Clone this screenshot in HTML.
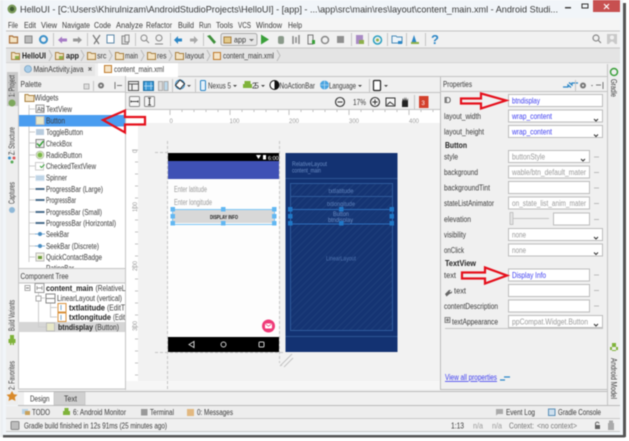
<!DOCTYPE html>
<html><head><meta charset="utf-8"><style>
html,body{margin:0;padding:0;background:#fff;width:629px;height:441px;overflow:hidden}
svg{display:block;filter:blur(.45px)}
text{font-family:"Liberation Sans",sans-serif;font-size:8px;fill:#3a3a3a}
.b{font-weight:bold;fill:#222}
.g{fill:#9a9a9a}
.bl{fill:#3d3df0}
.f{fill:#fff;stroke:#bdbdbd;stroke-width:1}
.s{stroke:#c4c4c4;stroke-width:1}
.fd{fill:#f3e3c3;stroke:#a9803f;stroke-width:1}
.ar{fill:none;stroke:#e5101c;stroke-width:2.2}
.pb{fill:#4a6d8c}
</style></head><body>
<svg width="629" height="441" viewBox="0 0 629 441" xmlns="http://www.w3.org/2000/svg">
<defs>
<pattern id="h" width="5" height="5" patternUnits="userSpaceOnUse" patternTransform="rotate(45)"><rect width="5" height="5" fill="#153473"/><rect width="1.2" height="5" fill="#1d3e7a"/></pattern>
</defs>
<rect width="629" height="441" fill="#fff"/>
<rect x="0" y="0" width="5" height="437" fill="#eceff2"/>
<rect x="623" y="3" width="3" height="434" fill="#555"/>
<rect x="3" y="435" width="622" height="2.5" fill="#555"/>
<rect x="3" y="0" width="620" height="435" fill="#f1f5f9"/>
<!-- title -->
<circle cx="12" cy="9" r="4.5" fill="#7a9a5a"/><circle cx="12" cy="9" r="2.2" fill="#3d5a32"/>
<text x="20" y="12.5" font-size="9.5" style="font-size:9.5px" textLength="538" lengthAdjust="spacingAndGlyphs">HelloUI - [C:\Users\Khirulnizam\AndroidStudioProjects\HelloUI] - [app] - ...\app\src\main\res\layout\content_main.xml - Android Studi...</text>
<rect x="593" y="0" width="27" height="12" fill="#c75050"/>
<path d="M604 4l5 5M609 4l-5 5" stroke="#fff" stroke-width="1.2"/>
<rect x="582" y="4" width="6" height="4" fill="none" stroke="#333" stroke-width="1"/>
<rect x="565" y="7" width="6" height="1.5" fill="#444"/>
<!-- menu -->
<rect x="6" y="18" width="614" height="13" fill="#f5f5f5"/>
<g>
<text x="8" y="28" textLength="10" lengthAdjust="spacingAndGlyphs">File</text>
<text x="24" y="28" textLength="12" lengthAdjust="spacingAndGlyphs">Edit</text>
<text x="41" y="28" textLength="16" lengthAdjust="spacingAndGlyphs">View</text>
<text x="62" y="28" textLength="28" lengthAdjust="spacingAndGlyphs">Navigate</text>
<text x="94" y="28" textLength="17" lengthAdjust="spacingAndGlyphs">Code</text>
<text x="116" y="28" textLength="27" lengthAdjust="spacingAndGlyphs">Analyze</text>
<text x="146" y="28" textLength="26" lengthAdjust="spacingAndGlyphs">Refactor</text>
<text x="178" y="28" textLength="16" lengthAdjust="spacingAndGlyphs">Build</text>
<text x="199" y="28" textLength="12" lengthAdjust="spacingAndGlyphs">Run</text>
<text x="216" y="28" textLength="17" lengthAdjust="spacingAndGlyphs">Tools</text>
<text x="238" y="28" textLength="13" lengthAdjust="spacingAndGlyphs">VCS</text>
<text x="256" y="28" textLength="26" lengthAdjust="spacingAndGlyphs">Window</text>
<text x="288" y="28" textLength="14" lengthAdjust="spacingAndGlyphs">Help</text>
</g>
<!-- toolbar -->
<rect x="6" y="31" width="614" height="17" fill="#f1f1f1"/>
<path d="M6 31H620" class="s"/>
<path d="M9.500 36h3l1 1h4v6h-8z" fill="#f3e3c3" stroke="#a9703a" stroke-width="1.2"/>
<rect x="25" y="36" width="7" height="7" fill="#bbb" stroke="#888"/>
<circle cx="43.500" cy="39.500" r="3.500" fill="none" stroke="#3a8fc8" stroke-width="2"/>
<path d="M53.500 33v13M87.500 33v13M135.500 33v13M170.500 33v13M203.500 33v13M351.500 33v13M368.500 33v13M387.500 33v13M406.500 33v13M425.500 33v13" class="s"/>
<path d="M58 40l4-3.500v2h5v3h-5v2z" fill="#a77cc6"/>
<path d="M82 40l-4-3.500v2h-5v3h5v2z" fill="#999"/>
<path d="M93 35l6 9M100 35l-6 9" stroke="#777" stroke-width="1.2"/>
<rect x="107" y="35" width="7" height="8" fill="#fff" stroke="#5c87a8"/>
<rect x="122" y="36" width="6" height="8" fill="#ddd" stroke="#888"/><rect x="125" y="35" width="4" height="7" fill="#eee" stroke="#888"/>
<circle cx="144" cy="38" r="3" fill="none" stroke="#888"/><path d="M146 40l3 3" stroke="#888"/>
<circle cx="159" cy="38" r="3" fill="none" stroke="#888"/><path d="M155 44h8" stroke="#888"/>
<path d="M174 40l4-4v2.500h4v3h-4v2.500z" fill="#2b86c6"/>
<path d="M198 40l-4-4v2.500h-4v3h4v2.500z" fill="#a9a9a9"/>
<path d="M207 36l3-1 6 7-2 2-5-6z" fill="#3d8f3a"/>
<rect x="221" y="33.500" width="36" height="12" rx="2" fill="#e6e6e6" stroke="#aaa"/>
<path d="M224 37h7v6h-7z" fill="#e2c98a" stroke="#a9803f"/>
<text x="234" y="42.500" textLength="12" lengthAdjust="spacingAndGlyphs">app</text>
<path d="M249 39h5l-2.500 2.500z" fill="#777"/>
<path d="M261 34.500l8 5-8 5z" fill="#3aa03a"/>
<rect x="278" y="36" width="6" height="8" rx="2" fill="#8a9a8a"/>
<path d="M293 36v8M296 37v6M299 35v9" stroke="#888" stroke-width="1.500"/>
<rect x="308" y="35" width="5" height="9" fill="#eee" stroke="#777"/><rect x="312" y="40" width="3" height="4" fill="#3aa03a"/>
<circle cx="325" cy="40" r="3.500" fill="none" stroke="#888" stroke-width="1.500"/>
<rect x="337" y="36" width="7" height="7" fill="#8f8f8f"/>
<rect x="356" y="35" width="7" height="9" fill="#a98ac4"/><rect x="359" y="40" width="5" height="4" fill="#8db04a"/>
<circle cx="377.500" cy="40" r="4" fill="none" stroke="#2ba0c0" stroke-width="1.500"/><circle cx="377.500" cy="40" r="1.500" fill="#8db04a"/>
<path d="M392 36h4l1 1h5v6h-10z" fill="#eef5fa" stroke="#4a8cb8"/><rect x="398" y="41" width="4" height="3" fill="#2b86c6"/>
<path d="M411 44l3-9 3 9z" fill="#2b86c6"/><rect x="411" y="42" width="8" height="2" fill="#8db04a"/>
<text x="431" y="44" style="font-size:13px;font-weight:bold;fill:#2b86c6">?</text>
<circle cx="596" cy="38" r="3" fill="none" stroke="#888" stroke-width="1.200"/><path d="M598 40l3 3" stroke="#888" stroke-width="1.200"/>
<rect x="607" y="34" width="10" height="10" fill="#c9c9c9"/><circle cx="612" cy="37.500" r="2" fill="#f1f1f1"/><path d="M609 44q3-5 6 0z" fill="#f1f1f1"/>
<!-- breadcrumb -->
<rect x="6" y="48" width="614" height="15" fill="#e4e4e4"/>
<path d="M6 48H620M6 63H620" class="s"/>
<g>
<path d="M11.500 52.500h3l1 1h4v6h-8z" class="fd"/><rect x="15" y="56" width="4" height="3" fill="#8db04a"/>
<text x="22" y="58.500" class="b" textLength="24" lengthAdjust="spacingAndGlyphs">HelloUI</text>
<path d="M49 50l3 5.500-3 5.500M81 50l3 5.500-3 5.500M109 50l3 5.500-3 5.500M141 50l3 5.500-3 5.500M169 50l3 5.500-3 5.500M207 50l3 5.500-3 5.500M277 50l3 5.500-3 5.500" fill="none" stroke="#bbb"/>
<path d="M55.500 52.500h3l1 1h4v6h-8z" class="fd"/><rect x="59" y="56" width="4" height="3" fill="#8db04a"/>
<text x="66" y="58.500" class="b" textLength="13" lengthAdjust="spacingAndGlyphs">app</text>
<path d="M87.500 52.500h3l1 1h4v6h-8z" class="fd"/>
<text x="97" y="58.500" textLength="9.500" lengthAdjust="spacingAndGlyphs">src</text>
<path d="M115.500 52.500h3l1 1h4v6h-8z" class="fd"/>
<text x="125" y="58.500" textLength="13" lengthAdjust="spacingAndGlyphs">main</text>
<path d="M147.500 52.500h3l1 1h4v6h-8z" class="fd"/>
<text x="157" y="58.500" textLength="9.500" lengthAdjust="spacingAndGlyphs">res</text>
<path d="M175.500 52.500h3l1 1h4v6h-8z" class="fd"/>
<text x="185" y="58.500" textLength="19" lengthAdjust="spacingAndGlyphs">layout</text>
<rect x="213.500" y="52.500" width="7" height="7" fill="#f4e4c8" stroke="#c07a2a"/>
<text x="223" y="58.500" textLength="51" lengthAdjust="spacingAndGlyphs">content_main.xml</text>
</g>
<!-- tabs -->
<rect x="6" y="63" width="614" height="13" fill="#f0f0f0"/>
<rect x="20" y="64" width="75" height="12" fill="#e6e6e6"/>
<circle cx="28" cy="69" r="3.500" fill="#a9cde8" stroke="#5b8fb8" stroke-width=".6"/>
<text x="33.500" y="72" textLength="50" lengthAdjust="spacingAndGlyphs" fill="#555">MainActivity.java</text>
<path d="M88.500 67.500l3 3M91.500 67.500l-3 3M169.500 67.500l3 3M172.500 67.500l-3 3" stroke="#555"/>
<rect x="98" y="63" width="80" height="14" fill="#fff"/>
<rect x="104.500" y="65.500" width="7" height="7" fill="#f4e4c8" stroke="#c07a2a"/>
<text x="114" y="72" textLength="50" lengthAdjust="spacingAndGlyphs">content_main.xml</text>
<path d="M6 76.500H98M178 76.500H607" class="s"/>
<!-- left strip -->
<rect x="6" y="76" width="12" height="329" fill="#eee"/>
<rect x="7" y="72" width="11" height="34" fill="#c9c9c9"/>
<text transform="translate(14.500 97) rotate(-90)" textLength="22" lengthAdjust="spacingAndGlyphs">1: Project</text>
<circle cx="12" cy="103" r="3.500" fill="#7da85c"/>
<text transform="translate(14.500 155) rotate(-90)" textLength="28" lengthAdjust="spacingAndGlyphs">Z: Structure</text>
<circle cx="9.500" cy="158" r="1.500" fill="#3a8fc8"/><circle cx="14" cy="158" r="1.500" fill="#d55"/><circle cx="12" cy="162" r="1.500" fill="#5a5"/>
<text transform="translate(14.500 204) rotate(-90)" textLength="22" lengthAdjust="spacingAndGlyphs">Captures</text>
<circle cx="12" cy="210" r="3" fill="#8fb8d8"/>
<text transform="translate(14.500 331) rotate(-90)" textLength="31" lengthAdjust="spacingAndGlyphs">Build Variants</text>
<path d="M8.500 339h7v4h-7zM10 335h4v4h-4zM10 343h1.500v2h-1.500zM12.500 343h1.500v2h-1.500z" fill="#7fb33a"/>
<text transform="translate(14.500 390) rotate(-90)" textLength="29" lengthAdjust="spacingAndGlyphs">2: Favorites</text>
<path d="M12 391l1.800 3.300 3.700.500-2.700 2.500.7 3.700-3.500-1.800-3.500 1.800.7-3.700-2.700-2.500 3.700-.500z" fill="#d98a2b"/>
<!-- palette -->
<rect x="18" y="76" width="108" height="316" fill="#f0f0f0"/>
<text x="20.500" y="87" textLength="21" lengthAdjust="spacingAndGlyphs">Palette</text>
<rect x="84" y="84" width="5" height="5" fill="#ddd" stroke="#999" stroke-width=".7"/>
<path d="M93.500 81v10" class="s"/>
<circle cx="101" cy="85.500" r="3" fill="#777"/><circle cx="101" cy="85.500" r="1" fill="#f0f0f0"/>
<path d="M115 82v7M117 85.500h5" stroke="#777"/>
<rect x="18" y="92" width="107" height="176" fill="#fff"/>
<path d="M18.500 92H125.500M125.500 76V392" class="s"/>
<path d="M25 94.500h3l1 1h5v6h-9z" class="fd"/>
<text x="34.500" y="100.500" textLength="24" lengthAdjust="spacingAndGlyphs">Widgets</text>
<path d="M29 105V262M29 109h6M29 120h6M29 132h6M29 143h6M29 155h6M29 166h6M29 177h6M29 189h6M29 200h6M29 212h6M29 223h6M29 234h6M29 246h6M29 257h6" stroke="#ccc"/>
<rect x="18" y="115" width="107" height="11.500" fill="#4a9df0"/>
<g>
<rect x="36" y="105" width="8" height="7.500" fill="#f5f5f5" stroke="#999"/><text x="37" y="111.500" style="font-size:6px">Ab</text>
<text x="46" y="112" textLength="26" lengthAdjust="spacingAndGlyphs">TextView</text>
<rect x="36" y="116.500" width="8" height="8" fill="#e8e8c8" stroke="#bbb"/>
<text x="46" y="123.500" textLength="19" lengthAdjust="spacingAndGlyphs" fill="#222">Button</text>
<rect x="36" y="129" width="8" height="6" fill="#b8ccde"/>
<text x="46" y="135" textLength="37" lengthAdjust="spacingAndGlyphs">ToggleButton</text>
<rect x="36" y="139.500" width="8" height="8" fill="#eee" stroke="#888"/><path d="M37 143.500l2.500 2.500 4-5" fill="none" stroke="#3aa03a" stroke-width="1.500"/>
<text x="46" y="146.500" textLength="26" lengthAdjust="spacingAndGlyphs">CheckBox</text>
<circle cx="40" cy="155" r="4" fill="#cfe5b5" stroke="#aaa" stroke-width=".6"/><circle cx="40" cy="155" r="2.300" fill="#7ab648"/>
<text x="46" y="158" textLength="36" lengthAdjust="spacingAndGlyphs">RadioButton</text>
<rect x="35.500" y="162.500" width="8" height="7.500" fill="#fff" stroke="#ccc"/><path d="M40 166l1.500 1.500 3-3" fill="none" stroke="#3aa03a"/>
<text x="46" y="169" textLength="50" lengthAdjust="spacingAndGlyphs">CheckedTextView</text>
<rect x="35.500" y="175" width="9" height="6" fill="#cfe0ef"/><path d="M36 177h8M36 179h8" stroke="#8fb0cc" stroke-width=".6"/>
<text x="46" y="180.500" textLength="21" lengthAdjust="spacingAndGlyphs">Spinner</text>
<rect x="35.500" y="188" width="9" height="2" class="pb"/>
<text x="46" y="192" textLength="57" lengthAdjust="spacingAndGlyphs">ProgressBar (Large)</text>
<rect x="35.500" y="199" width="9" height="2" class="pb"/>
<text x="46" y="203" textLength="30" lengthAdjust="spacingAndGlyphs">ProgressBar</text>
<rect x="35.500" y="211" width="9" height="2" class="pb"/>
<text x="46" y="215" textLength="56" lengthAdjust="spacingAndGlyphs">ProgressBar (Small)</text>
<rect x="35.500" y="222" width="9" height="2" class="pb"/>
<text x="46" y="226" textLength="70" lengthAdjust="spacingAndGlyphs">ProgressBar (Horizontal)</text>
<path d="M35 234h10" stroke="#7fb0d8"/><circle cx="40" cy="234" r="2" fill="#4a8cc0"/>
<text x="46" y="237" textLength="23" lengthAdjust="spacingAndGlyphs">SeekBar</text>
<path d="M35 246h10" stroke="#7fb0d8"/><circle cx="40" cy="246" r="2" fill="#4a8cc0"/>
<text x="46" y="249" textLength="53" lengthAdjust="spacingAndGlyphs">SeekBar (Discrete)</text>
<rect x="36" y="253" width="8" height="8" fill="#f0f0e0" stroke="#bbb"/><rect x="38" y="256" width="4" height="3" fill="#6a9a3a"/>
<text x="46" y="260" textLength="56" lengthAdjust="spacingAndGlyphs">QuickContactBadge</text>
<text x="46" y="271" textLength="28" lengthAdjust="spacingAndGlyphs">RatingBar</text>
</g>
<rect x="18" y="268" width="107" height="15" fill="#f0f0f0"/>
<path d="M18 268.500H125.500" class="s"/>
<text x="20.500" y="279" textLength="48" lengthAdjust="spacingAndGlyphs">Component Tree</text>
<!-- tree -->
<rect x="18" y="283" width="107" height="106" fill="#fff"/>
<path d="M18.500 283H125.500M18.500 389H125.500M18.500 92V389" class="s"/>
<rect x="18" y="322" width="107" height="10" fill="#d6d6d6"/>
<path d="M38.500 293V327H46M39 298h6M50.500 303V317H57M51 307.500h6" fill="none" stroke="#ccc"/>
<rect x="25" y="285.500" width="5" height="5" fill="#fff" stroke="#aaa"/><path d="M26 288h3" stroke="#777"/>
<rect x="35" y="283.500" width="9" height="9" fill="#fff" stroke="#999"/><path d="M37 286v4M42 286v4M37 288h5" stroke="#777" stroke-width=".7"/>
<text x="46" y="291" class="b" textLength="47" lengthAdjust="spacingAndGlyphs">content_main</text>
<text x="95.500" y="291" textLength="30" lengthAdjust="spacingAndGlyphs">(RelativeL</text>
<rect x="36" y="296" width="5" height="5" fill="#fff" stroke="#aaa"/>
<rect x="46" y="294" width="9" height="9" fill="#fff" stroke="#888"/><path d="M46 298.500h9" stroke="#888"/>
<text x="57" y="301" textLength="65" lengthAdjust="spacingAndGlyphs" fill="#555">LinearLayout (vertical)</text>
<rect x="58" y="303.500" width="8" height="8.500" fill="#fff" stroke="#d9923c"/><path d="M61 305v5" stroke="#7aa8cc"/>
<text x="69" y="310.500" class="b" textLength="36" lengthAdjust="spacingAndGlyphs">txtlatitude</text>
<text x="107" y="310.500" textLength="18" lengthAdjust="spacingAndGlyphs">(EditT</text>
<rect x="58" y="313" width="8" height="8.500" fill="#fff" stroke="#d9923c"/><path d="M61 315v5" stroke="#7aa8cc"/>
<text x="69" y="320" class="b" textLength="42" lengthAdjust="spacingAndGlyphs">txtlongitude</text>
<text x="113" y="320" textLength="12" lengthAdjust="spacingAndGlyphs">(Edit</text>
<rect x="46.500" y="323" width="8" height="8" fill="#e8e8c8" stroke="#bbb"/>
<text x="58" y="330" class="b" textLength="35" lengthAdjust="spacingAndGlyphs">btndisplay</text>
<text x="95" y="330" textLength="24" lengthAdjust="spacingAndGlyphs">(Button)</text>
<!-- design toolbars -->
<rect x="126" y="77" width="314" height="32" fill="#f0f0f0"/>
<rect x="128.500" y="81.500" width="10" height="9" fill="none" stroke="#555"/><path d="M129 84h9M132 84v7" stroke="#555"/>
<rect x="143.500" y="81.500" width="10" height="9" fill="#3a9ad8" stroke="#1d6ca0"/><path d="M146 82v8M151 82v8M144 86h9" stroke="#bfe0f5" stroke-width=".7"/>
<rect x="158.500" y="81.500" width="4" height="9" fill="#ddd" stroke="#aaa"/><rect x="164" y="81.500" width="4" height="9" fill="#bcd8ea" stroke="#aaa"/>
<path d="M172.500 79v14M195.500 79v14M369.500 79v14" class="s"/>
<circle cx="180" cy="84.500" r="4.500" fill="none" stroke="#2b86c6"/><rect x="177" y="81" width="6" height="7" transform="rotate(40 180 84.500)" fill="#fff" stroke="#333"/>
<path d="M187 85h4l-2 2z" fill="#555"/>
<rect x="200.500" y="80.500" width="5" height="10" rx="1" fill="#e5f1fa" stroke="#2b86c6"/>
<text x="208" y="88.500" textLength="23" lengthAdjust="spacingAndGlyphs">Nexus 5</text>
<path d="M233 85h4l-2 2z" fill="#444"/>
<path d="M243 84h9v4h-9zM244.500 81h6v3h-6z" fill="#7fb33a"/>
<text x="252" y="88.500" textLength="7">25</text>
<path d="M261 85h4l-2 2z" fill="#444"/>
<circle cx="274.500" cy="85" r="4.500" fill="#fff" stroke="#111"/><path d="M274.500 80.500a4.500 4.500 0 010 9z" fill="#111"/>
<text x="279.500" y="88.500" textLength="35.500" lengthAdjust="spacingAndGlyphs">NoActionBar</text>
<circle cx="324.500" cy="85" r="4.500" fill="#4aa4e0"/><path d="M320 85h9M324.500 80.500v9" stroke="#cfe8f8" stroke-width=".6"/>
<text x="329" y="88.500" textLength="27" lengthAdjust="spacingAndGlyphs">Language</text>
<path d="M358 85h4l-2 2z" fill="#444"/>
<rect x="373.500" y="80.500" width="7" height="10" rx="1" fill="#fff" stroke="#222" stroke-width="1.200"/>
<path d="M384 85h4l-2 2z" fill="#444"/>
<rect x="129.500" y="96.500" width="10" height="10" rx="1" fill="#f6f6f6" stroke="#888"/><path d="M131 101.500h7M131 100.500v2M138 100.500v2" stroke="#444"/>
<rect x="144.500" y="96.500" width="10" height="10" rx="1" fill="#f6f6f6" stroke="#888"/><path d="M149.500 98v7M148 98h3M148 105h3" stroke="#444"/>
<circle cx="340" cy="102" r="4.500" fill="none" stroke="#333" stroke-width="1.100"/><path d="M337.500 102h5" stroke="#333"/>
<text x="353" y="105" textLength="13" lengthAdjust="spacingAndGlyphs">17%</text>
<circle cx="375" cy="102" r="4.500" fill="none" stroke="#333" stroke-width="1.100"/><path d="M372.500 102h5M375 99.500v5" stroke="#333"/>
<rect x="386" y="98" width="9" height="8" fill="#f6f6f6" stroke="#333"/><path d="M387 105l3-3 4 3" fill="none" stroke="#333"/>
<path d="M402 107v-5l1-4 1 3 .500-4 1 4 .500-4 1 4 1-3v9z" fill="#222"/>
<path d="M414.500 95v14" class="s"/>
<rect x="419" y="96" width="9.500" height="12" fill="#d3402c"/><text x="421.500" y="105" style="font-size:6px;fill:#fff">3</text>
<path d="M126 92.500H440M126 109.500H440" class="s"/>
<!-- canvas -->
<rect x="126" y="110" width="314" height="280" fill="#f2f2f2"/>
<rect x="126" y="110" width="314" height="13" fill="#fff"/>
<rect x="126" y="110" width="12" height="271" fill="#fff"/>
<rect x="126" y="381" width="314" height="8" fill="#f6f6f6"/>
<path d="M170 110v5M182 110v2M194 110v2M206 110v2M218 110v2M230 110v5M242 110v2M254 110v2M266 110v2M278 110v2M289 110v5M301 110v2M313 110v2M325 110v2M337 110v2M349 110v5M361 110v2M373 110v2M385 110v2M397 110v2M409 110v5M421 110v2M433 110v2" stroke="#c2c2c2"/>
<text x="169.500" y="123" class="g" style="font-size:6px">0</text>
<text x="229.500" y="123" class="g" style="font-size:6px">100</text>
<text x="289" y="123" class="g" style="font-size:6px">200</text>
<text x="349" y="123" class="g" style="font-size:6px">300</text>
<text x="409" y="123" class="g" style="font-size:6px">400</text>
<path d="M132 150h6M135 162h3M135 174h3M135 186h3M135 198h3M132 208h6M135 220h3M135 232h3M135 244h3M135 256h3M132 267h6M135 279h3M135 291h3M135 303h3M135 315h3M132 327h6M135 339h3M135 351h3M135 363h3M135 375h3" stroke="#c2c2c2"/>
<text transform="translate(137 153) rotate(-90)" class="g" style="font-size:6px">0</text>
<text transform="translate(137 212) rotate(-90)" class="g" style="font-size:6px">100</text>
<text transform="translate(137 271) rotate(-90)" class="g" style="font-size:6px">200</text>
<text transform="translate(137 331) rotate(-90)" class="g" style="font-size:6px">300</text>
<path d="M167.500 141V390M279.500 141V363M155 152.500H167M155 352.500H285" stroke="#c5c5c5" stroke-dasharray="3 2"/>
<path d="M282 365l-1 .5M292 354l-12 12M293 358l-9 9" stroke="#c5c5c5"/>
<!-- phone -->
<rect x="168" y="153" width="111" height="199" fill="#fdfdfd"/>
<rect x="168" y="153" width="111" height="8" fill="#000"/>
<path d="M256 155h5l-2.500 4z" fill="#fff"/><rect x="263" y="155" width="3" height="4.500" fill="#fff"/>
<text x="268" y="160" style="font-size:5.500px;fill:#fff">6:00</text>
<rect x="168" y="161" width="111" height="18" fill="#3f51b5"/>
<text x="174" y="192" class="g" textLength="33" lengthAdjust="spacingAndGlyphs">Enter latitude</text>
<text x="174" y="205" class="g" textLength="38" lengthAdjust="spacingAndGlyphs">Enter longitude</text>
<rect x="173" y="210" width="101" height="13" fill="#d8d8d8"/>
<text x="210" y="219" class="b" style="font-size:5.500px" textLength="28" lengthAdjust="spacingAndGlyphs">DISPLAY INFO</text>
<rect x="172.500" y="209.500" width="102" height="15" fill="none" stroke="#7cc6f7"/>
<g fill="#62b7f2">
<rect x="170.500" y="207" width="4.500" height="4.500"/><rect x="221" y="207" width="4.500" height="4.500"/><rect x="272" y="207" width="4.500" height="4.500"/>
<rect x="170.500" y="214" width="4.500" height="4.500"/><rect x="272" y="214" width="4.500" height="4.500"/>
<rect x="170.500" y="221" width="4.500" height="4.500"/><rect x="221" y="221" width="4.500" height="4.500"/><rect x="272" y="221" width="4.500" height="4.500"/>
</g>
<circle cx="268.500" cy="326" r="6.500" fill="#ef3a78"/><rect x="265" y="323.500" width="7" height="5" rx="1" fill="#fff"/><path d="M265.500 324l3 2.300 3-2.300" fill="none" stroke="#ef3a78" stroke-width=".7"/>
<rect x="168" y="337" width="111" height="15" fill="#000"/>
<path d="M189 344.500l5-3v6z" fill="none" stroke="#ccc"/>
<circle cx="223.500" cy="344.500" r="2.500" fill="none" stroke="#ccc"/>
<rect x="259" y="342" width="5" height="5" rx="1" fill="none" stroke="#ccc"/>
<!-- blueprint -->
<rect x="285.500" y="153" width="112" height="199" fill="#133272"/>
<path d="M285.500 178.500H397.500M285.500 336.500H397.500" stroke="#2d5594"/>
<rect x="290.500" y="183.500" width="102" height="147" fill="url(#h)" stroke="#2e5a9c"/>
<path d="M291 196.500H392" stroke="#2e5a9c"/>
<rect x="290.500" y="209.500" width="102" height="14.500" fill="#17397a" fill-opacity=".5" stroke="#2d6dbb"/>
<text x="292" y="166" fill="#5f83bd" style="font-size:6px;fill:#6a8cc4" textLength="35" lengthAdjust="spacingAndGlyphs">RelativeLayout</text>
<text x="292" y="172.500" style="font-size:6px;fill:#6a8cc4" textLength="29" lengthAdjust="spacingAndGlyphs">content_main</text>
<text x="328.500" y="193" style="font-size:6px;fill:#5f83bd" textLength="25" lengthAdjust="spacingAndGlyphs">txtlatitude</text>
<text x="327" y="206" style="font-size:6px;fill:#5f83bd" textLength="28" lengthAdjust="spacingAndGlyphs">txtlongitude</text>
<text x="333" y="216" style="font-size:6px;fill:#6a8cc4" textLength="16" lengthAdjust="spacingAndGlyphs">Button</text>
<text x="328" y="222" style="font-size:6px;fill:#6a8cc4" textLength="25" lengthAdjust="spacingAndGlyphs">btndisplay</text>
<text x="326" y="260.500" style="font-size:6px;fill:#4f74b0" textLength="30" lengthAdjust="spacingAndGlyphs">LinearLayout</text>
<g fill="#1f78c8">
<rect x="288" y="207" width="4.500" height="4.500"/><rect x="339" y="207" width="4.500" height="4.500"/><rect x="389.500" y="207" width="4.500" height="4.500"/>
<rect x="288" y="214" width="4.500" height="4.500"/><rect x="389.500" y="214" width="4.500" height="4.500"/>
<rect x="288" y="221" width="4.500" height="4.500"/><rect x="339" y="221" width="4.500" height="4.500"/><rect x="389.500" y="221" width="4.500" height="4.500"/>
</g>
<!-- properties -->
<rect x="440" y="77" width="167" height="313" fill="#f0f0f0"/>
<path d="M440.500 77V390M440 389.500H607" stroke="#bdbdbd"/>
<path d="M440 91.500H607" class="s"/>
<text x="443" y="87" textLength="29" lengthAdjust="spacingAndGlyphs">Properties</text>
<path d="M563 87h5v-2l3 2.500M578 83h-6v2l-3-2.500" stroke="#2b86c6" stroke-width="1.300" fill="none"/>
<path d="M575.500 80v12" class="s"/>
<circle cx="583" cy="85.500" r="3" fill="#777"/><circle cx="583" cy="85.500" r="1" fill="#f0f0f0"/>
<path d="M591 85h2l-1 1.500z" fill="#777"/>
<path d="M596 85h5M603 82v7" stroke="#777"/>
<g>
<rect class="f" x="508.500" y="94.500" width="94" height="12"/>
<rect class="f" x="508.500" y="110" width="94" height="12"/>
<rect class="f" x="508.500" y="125.500" width="94" height="12"/>
<rect class="f" x="508.500" y="150.500" width="81" height="12"/>
<rect class="f" x="508.500" y="166" width="81" height="12"/>
<rect class="f" x="508.500" y="181.500" width="81" height="12"/>
<rect class="f" x="508.500" y="197" width="81" height="12"/>
<rect class="f" x="553.500" y="213" width="36" height="12"/>
<rect class="f" x="508.500" y="228.500" width="94" height="12"/>
<rect class="f" x="508.500" y="244" width="94" height="12"/>
<rect class="f" x="508.500" y="269" width="81" height="12"/>
<rect class="f" x="508.500" y="284.500" width="81" height="12"/>
<rect class="f" x="508.500" y="300" width="81" height="12"/>
<rect class="f" x="508.500" y="315.500" width="94" height="12"/>
</g>
<path d="M594 119l2 2 2-2M594 134.500l2 2 2-2M581 159l2 2 2-2M594 237l2 2 2-2M594 252.500l2 2 2-2M594 324l2 2 2-2" fill="none" stroke="#333" stroke-width="1.100"/>
<path d="M594 157h5M594 172.500h5M594 188h5M594 203.500h5M594 219.500h5M594 275h5M594 290.500h5M594 306h5" stroke="#bbb"/>
<rect x="510" y="212.500" width="3" height="12" fill="#e4e4e4" stroke="#aaa" stroke-width=".6"/><path d="M513 218.500h36" stroke="#c4c4c4"/>
<g>
<text x="444" y="103" textLength="7">ID</text>
<text x="444" y="119" textLength="37" lengthAdjust="spacingAndGlyphs">layout_width</text>
<text x="444" y="134.500" textLength="40" lengthAdjust="spacingAndGlyphs">layout_height</text>
<text x="445" y="148" class="b" textLength="22" lengthAdjust="spacingAndGlyphs">Button</text>
<text x="444" y="159.500" textLength="14" lengthAdjust="spacingAndGlyphs">style</text>
<text x="444" y="175" textLength="34" lengthAdjust="spacingAndGlyphs">background</text>
<text x="444" y="190.500" textLength="46" lengthAdjust="spacingAndGlyphs">backgroundTint</text>
<text x="444" y="206" textLength="50" lengthAdjust="spacingAndGlyphs">stateListAnimator</text>
<text x="444" y="222" textLength="27" lengthAdjust="spacingAndGlyphs">elevation</text>
<text x="444" y="237.500" textLength="22" lengthAdjust="spacingAndGlyphs">visibility</text>
<text x="444" y="253" textLength="20" lengthAdjust="spacingAndGlyphs">onClick</text>
<text x="445" y="266" class="b" textLength="31" lengthAdjust="spacingAndGlyphs">TextView</text>
<text x="444" y="278" textLength="12" lengthAdjust="spacingAndGlyphs">text</text>
<text x="454" y="293.500" textLength="12" lengthAdjust="spacingAndGlyphs">text</text>
<text x="444" y="309" textLength="54" lengthAdjust="spacingAndGlyphs">contentDescription</text>
<text x="452" y="324.500" textLength="46" lengthAdjust="spacingAndGlyphs">textAppearance</text>
</g>
<path d="M445 294l4-4 2 0-1.500 1.500 1 1 1.500-1.500 0 2-2.500 1-3 2.500z" fill="#666"/>
<rect x="445" y="317.500" width="5" height="5" fill="#ddd" stroke="#888"/><path d="M446 320h3M447.500 318.500v3" stroke="#555" stroke-width=".7"/>
<g>
<text x="512" y="103.500" class="bl" textLength="28" lengthAdjust="spacingAndGlyphs">btndisplay</text>
<text x="512" y="119" class="bl" textLength="40" lengthAdjust="spacingAndGlyphs">wrap_content</text>
<text x="512" y="134.500" class="bl" textLength="40" lengthAdjust="spacingAndGlyphs">wrap_content</text>
<text x="512" y="159.500" class="g" textLength="33" lengthAdjust="spacingAndGlyphs">buttonStyle</text>
<text x="512" y="175" class="g" textLength="74" lengthAdjust="spacingAndGlyphs">wable/btn_default_mater</text>
<text x="512" y="206" class="g" textLength="74" lengthAdjust="spacingAndGlyphs">on_state_list_anim_mater</text>
<text x="512" y="237.500" class="g" textLength="14" lengthAdjust="spacingAndGlyphs">none</text>
<text x="512" y="253" class="g" textLength="14" lengthAdjust="spacingAndGlyphs">none</text>
<text x="512" y="278" class="bl" textLength="34" lengthAdjust="spacingAndGlyphs">Display Info</text>
<text x="512" y="324.500" class="g" textLength="76" lengthAdjust="spacingAndGlyphs">ppCompat.Widget.Button</text>
</g>
<path d="M445 328.500H603" class="s"/>
<text x="445" y="380" class="bl" text-decoration="underline" textLength="52" lengthAdjust="spacingAndGlyphs">View all properties</text>
<path d="M500 380h5M510 377h-6" stroke="#2b86c6" stroke-width="1.300"/>
<!-- arrows -->
<path class="ar" d="M461 98.500h20v-5l25 7-25 8v-5h-20z"/>
<path class="ar" d="M462 272.500h23v-5l22 8-22 8v-5h-23z"/>
<path class="ar" d="M103 120l22-9.500v6.500h20v7.500h-20v8z"/>
<!-- right strip -->
<rect x="607" y="64" width="13" height="341" fill="#eee"/>
<path d="M607.500 64V405" class="s"/>
<circle cx="614" cy="72" r="3.500" fill="none" stroke="#3aa03a" stroke-width="1.500"/>
<text transform="translate(611 79) rotate(90)" textLength="18" lengthAdjust="spacingAndGlyphs">Gradle</text>
<path d="M610 350h8v-3h-8zM612 343h4v8h-4z" fill="#7fb33a"/>
<text transform="translate(611 358) rotate(90)" textLength="41" lengthAdjust="spacingAndGlyphs">Android Model</text>
<!-- bottom -->
<rect x="18" y="390" width="589" height="15" fill="#f0f0f0"/>
<path d="M18 391.500H607M18 405.500H620" stroke="#bbb"/>
<rect x="24" y="392" width="30" height="13" fill="#fff"/>
<rect x="54" y="392" width="31" height="13" fill="#d0d0d0" stroke="#bbb" stroke-width=".6"/>
<text x="30" y="401.500" textLength="19.500" lengthAdjust="spacingAndGlyphs">Design</text>
<text x="64" y="401.500" textLength="13" lengthAdjust="spacingAndGlyphs" fill="#555">Text</text>
<rect x="6" y="406" width="614" height="13" fill="#ededed"/>
<rect x="6" y="419" width="614" height="13" fill="#f0f0f0"/>
<path d="M6 418.500H620M6 431.500H620" stroke="#c8c8c8"/>
<rect x="22" y="409" width="6" height="5" fill="#b9d2e5"/><rect x="25" y="411" width="5" height="4" fill="#c9a25c"/>
<text x="32" y="415" textLength="18" lengthAdjust="spacingAndGlyphs">TODO</text>
<path d="M63 411h7v4h-7zM64.500 408h4v3h-4z" fill="#7fb33a"/>
<text x="73" y="415" textLength="53" lengthAdjust="spacingAndGlyphs">6: Android Monitor</text>
<rect x="141" y="409" width="6.500" height="6.500" fill="#999"/>
<text x="150" y="415" textLength="24" lengthAdjust="spacingAndGlyphs">Terminal</text>
<rect x="187" y="409" width="7" height="7" fill="#e2b880"/>
<text x="197" y="415" textLength="36" lengthAdjust="spacingAndGlyphs">0: Messages</text>
<path d="M496 409h7v5h-5l-2 1.500z" fill="#aaa"/>
<text x="506" y="415" textLength="29" lengthAdjust="spacingAndGlyphs">Event Log</text>
<rect x="548.500" y="409" width="6.500" height="6.500" fill="#cfe0ee" stroke="#5b8fb8"/>
<text x="558" y="415" textLength="43" lengthAdjust="spacingAndGlyphs">Gradle Console</text>
<rect x="11" y="421.500" width="8" height="8" rx="1" fill="#bdbdbd" stroke="#888"/>
<text x="24" y="428.500" textLength="143" lengthAdjust="spacingAndGlyphs">Gradle build finished in 12s 91ms (25 minutes ago)</text>
<text x="451" y="428.500" textLength="13" lengthAdjust="spacingAndGlyphs">1:13</text>
<text x="473" y="428.500" class="g" textLength="10" lengthAdjust="spacingAndGlyphs">n/a</text>
<text x="492" y="428.500" class="g" textLength="10" lengthAdjust="spacingAndGlyphs">n/a</text>
<text x="509" y="428.500" style="fill:#777" textLength="25" lengthAdjust="spacingAndGlyphs">Context:</text>
<text x="537" y="428.500" style="fill:#777" textLength="40" lengthAdjust="spacingAndGlyphs">&lt;no context&gt;</text>
<rect x="595" y="425" width="5" height="4" fill="#666"/><path d="M595.500 425v-1.500a1.800 1.800 0 013.500 0" fill="none" stroke="#666"/>
<path d="M608 423h6v7h-6zM609 420.500h4v3h-4z" fill="#aaa"/>
</svg>
</body></html>
